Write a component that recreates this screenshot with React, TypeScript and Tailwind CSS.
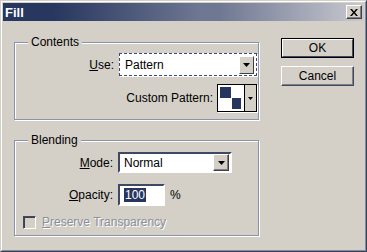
import React from "react";

const font = { fontFamily: '"Liberation Sans", Arial, sans-serif' };

function DropArrow() {
  return (
    <svg width="7" height="4" viewBox="0 0 7 4">
      <path d="M0 0h7L3.5 4z" fill="#000" />
    </svg>
  );
}

function GroupBox({ title, className, children }: { title: string; className?: string; children: React.ReactNode }) {
  return (
    <div
      className={`relative border border-[#8a93ad] shadow-[1px_1px_0_#fff,inset_1px_1px_0_#fff] ${className ?? ""}`}
    >
      <span className="absolute -top-[8px] left-[13px] bg-[#d4d0c8] px-[3px] leading-[14px] text-black">
        {title}
      </span>
      {children}
    </div>
  );
}

export default function App() {
  return (
    <div style={font} className="h-[252px] w-[367px] text-[12px] text-black select-none">
      <div className="h-full w-full border border-t-[#d4d0c8] border-l-[#d4d0c8] border-r-[#3a4258] border-b-[#3a4258]">
        <div className="flex h-full w-full flex-col border border-t-white border-l-white border-r-[#808aa0] border-b-[#808aa0] bg-[#d4d0c8] p-px">
          {/* Title bar */}
          <div className="flex h-[18px] items-center justify-between bg-[linear-gradient(90deg,#28375f_0%,#28375f_14%,#6f7893_55%,#6f7893_60%,#c9c9cf_100%)] pl-[2px] pr-[2px]">
            <span className="text-[13px] font-bold leading-none text-white">Fill</span>
            <button className="flex h-[14px] w-[16px] items-center justify-center border border-t-white border-l-white border-r-[#404040] border-b-[#404040] bg-[#d4d0c8] shadow-[inset_-1px_-1px_0_#808080]">
              <svg width="8" height="7" viewBox="0 0 8 7">
                <path d="M0 0h2l2 2.5L6 0h2L5 3.5 8 7H6L4 4.5 2 7H0l3-3.5z" fill="#000" />
              </svg>
            </button>
          </div>

          {/* Body */}
          <div className="flex pl-[11px]">
            <div className="w-[245px]">
              <GroupBox title="Contents" className="mt-[21px] px-px pt-[10px] pb-[7px]">
                <div className="flex items-center justify-end gap-[5px]">
                  <span>
                    <span className="underline">U</span>se:
                  </span>
                  <div className="flex h-[23px] w-[138px] items-center border border-dashed border-[#3b4a78] pl-[5px] pr-[2px] bg-white shadow-[1px_1px_0_#fff]">
                    <span className="flex-1">Pattern</span>
                    <div className="flex h-[18px] w-[15px] items-center justify-center border border-t-white border-l-white border-r-[#404040] border-b-[#404040] bg-[#d4d0c8]">
                      <DropArrow />
                    </div>
                  </div>
                </div>
                <div className="mt-[8px] flex items-center justify-end gap-[4px]">
                  <span>Custom Pattern:</span>
                  <div className="flex h-[28px] w-[40px] border border-black bg-[#d4d0c8] shadow-[1px_1px_0_#fff]">
                    <div className="flex w-[26px] items-center justify-center bg-white">
                      <svg width="24" height="24" viewBox="0 0 24 24">
                        <rect x="1" y="1" width="11" height="11" fill="#27365f" />
                        <rect x="13" y="12" width="9" height="11" fill="#27365f" />
                      </svg>
                    </div>
                    <div className="flex flex-1 items-center justify-center border-l border-black">
                      <svg width="5" height="3" viewBox="0 0 5 3">
                        <path d="M0 0h5L2.5 3z" fill="#000" />
                      </svg>
                    </div>
                  </div>
                </div>
              </GroupBox>

              <GroupBox title="Blending" className="mt-[20px] pt-[11px] pb-[6px]">
                <div className="grid grid-cols-[98px_auto] items-center gap-x-[5px] gap-y-[11px]">
                  <span className="text-right">
                    <span className="underline">M</span>ode:
                  </span>
                  <div className="flex h-[21px] w-[114px] items-center border-2 border-t-[#3f4866] border-l-[#3f4866] border-r-white border-b-white bg-white pl-[4px] pr-px">
                    <span className="flex-1">Normal</span>
                    <div className="flex h-[17px] w-[16px] items-center justify-center border border-t-white border-l-white border-r-[#404040] border-b-[#404040] bg-[#d4d0c8] shadow-[inset_-1px_-1px_0_#808080]">
                      <DropArrow />
                    </div>
                  </div>
                  <span className="text-right">
                    <span className="underline">O</span>pacity:
                  </span>
                  <div className="flex items-center gap-[5px]">
                    <div className="flex h-[22px] w-[47px] items-center border-2 border-t-[#3f4866] border-l-[#3f4866] border-r-white border-b-white bg-white pl-[4px]">
                      <span className="bg-[#27365f] px-px leading-[14px] text-white">100</span>
                    </div>
                    <span>%</span>
                  </div>
                </div>
                <div className="mt-[10px] flex h-[13px] items-center gap-[6px] pl-[8px]">
                  <span className="h-[13px] w-[13px] border border-t-[#3f4866] border-l-[#3f4866] border-r-white border-b-white shadow-[inset_1px_1px_0_#404040]" />
                  <span className="leading-[13px] text-[#8a8f9c] [text-shadow:1px_1px_0_#fff]">
                    <span className="underline">P</span>reserve Transparency
                  </span>
                </div>
              </GroupBox>
            </div>

            {/* Buttons */}
            <div className="ml-[22px] flex flex-col gap-[8px] pt-[17px]">
              <button className="h-[20px] w-[73px] border border-black">
                <div className="flex h-full w-full items-center justify-center border border-t-white border-l-white border-r-[#3f4866] border-b-[#3f4866]">
                  OK
                </div>
              </button>
              <button className="flex h-[20px] w-[73px] items-center justify-center border border-t-white border-l-white border-r-[#3f4866] border-b-[#3f4866] shadow-[inset_-1px_-1px_0_#808080]">
                Cancel
              </button>
            </div>
          </div>
        </div>
      </div>
    </div>
  );
}
